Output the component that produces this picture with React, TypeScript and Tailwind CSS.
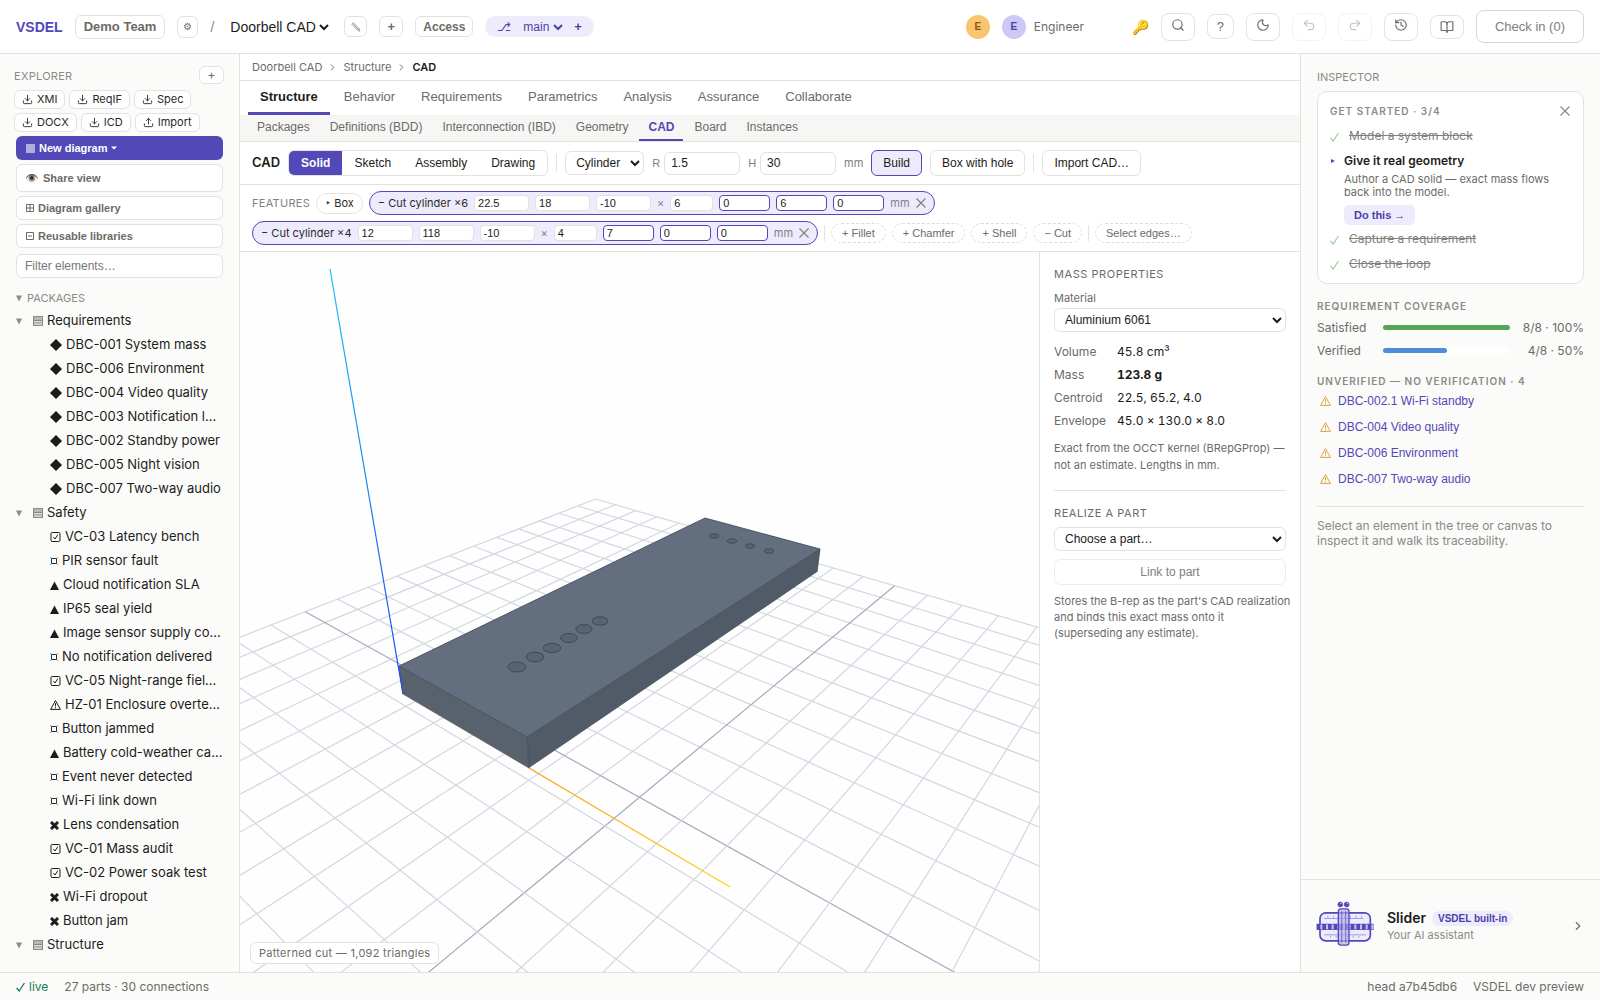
import React from "react";
import {
  BookOpen,
  ChevronRight,
  Download,
  History,
  Moon,
  Redo2,
  Search,
  Undo2,
  Upload,
} from "lucide-react";
import clsx from "clsx";

type IconKind = "diamond" | "check" | "pin" | "triangle" | "warning" | "cross";
type TreeNode = { icon: IconKind; label: string };
type TreeGroup = { name: string; items: TreeNode[] };

const tree: TreeGroup[] = [
  {
    name: "Requirements",
    items: [
      { icon: "diamond", label: "DBC-001 System mass" },
      { icon: "diamond", label: "DBC-006 Environment" },
      { icon: "diamond", label: "DBC-004 Video quality" },
      { icon: "diamond", label: "DBC-003 Notification l…" },
      { icon: "diamond", label: "DBC-002 Standby power" },
      { icon: "diamond", label: "DBC-005 Night vision" },
      { icon: "diamond", label: "DBC-007 Two-way audio" },
    ],
  },
  {
    name: "Safety",
    items: [
      { icon: "check", label: "VC-03 Latency bench" },
      { icon: "pin", label: "PIR sensor fault" },
      { icon: "triangle", label: "Cloud notification SLA" },
      { icon: "triangle", label: "IP65 seal yield" },
      { icon: "triangle", label: "Image sensor supply co…" },
      { icon: "pin", label: "No notification delivered" },
      { icon: "check", label: "VC-05 Night-range fiel…" },
      { icon: "warning", label: "HZ-01 Enclosure overte…" },
      { icon: "pin", label: "Button jammed" },
      { icon: "triangle", label: "Battery cold-weather ca…" },
      { icon: "pin", label: "Event never detected" },
      { icon: "pin", label: "Wi-Fi link down" },
      { icon: "cross", label: "Lens condensation" },
      { icon: "check", label: "VC-01 Mass audit" },
      { icon: "check", label: "VC-02 Power soak test" },
      { icon: "cross", label: "Wi-Fi dropout" },
      { icon: "cross", label: "Button jam" },
    ],
  },
  { name: "Structure", items: [] },
];

const exchange = ["XMI", "ReqIF", "Spec", "DOCX", "ICD", "Import"];

const tabs = [
  "Structure",
  "Behavior",
  "Requirements",
  "Parametrics",
  "Analysis",
  "Assurance",
  "Collaborate",
];

const subTabs = [
  "Packages",
  "Definitions (BDD)",
  "Interconnection (IBD)",
  "Geometry",
  "CAD",
  "Board",
  "Instances",
];

const modes = ["Solid", "Sketch", "Assembly", "Drawing"];

const massRows = [
  ["Volume", "45.8 cm³"],
  ["Mass", "123.8 g"],
  ["Centroid", "22.5, 65.2, 4.0"],
  ["Envelope", "45.0 × 130.0 × 8.0"],
];

const unverified = [
  "DBC-002.1 Wi-Fi standby",
  "DBC-004 Video quality",
  "DBC-006 Environment",
  "DBC-007 Two-way audio",
];

const arial = "font-['Liberation_Sans',Arial,sans-serif]";

const Cross: React.FC = () => (
  <svg width="10" height="10" viewBox="0 0 10 10" stroke="currentColor" strokeWidth="1.2">
    <path d="M0.5 0.5 9.5 9.5M9.5 0.5 0.5 9.5" />
  </svg>
);

const Check: React.FC = () => (
  <svg width="9" height="10" viewBox="0 0 9 10" fill="none" stroke="currentColor" strokeWidth="1.3">
    <path d="M0.6 6 3.2 9 8.4 1" />
  </svg>
);

const Caret: React.FC = () => (
  <svg width="6" height="7" viewBox="0 0 6 7" fill="currentColor">
    <path d="M0 0.5H6L3 6.5Z" />
  </svg>
);

const Warning: React.FC = () => (
  <svg
    width="11"
    height="10"
    viewBox="0 0 11 10"
    fill="none"
    stroke="currentColor"
    strokeLinejoin="round"
  >
    <path d="M5.5 0.6 10.4 9.4H0.6Z" />
    <path d="M5.5 3.2V6.4M5.5 7.2V8.3" />
  </svg>
);

const NodeIcon: React.FC<{ kind: IconKind }> = ({ kind }) => {
  switch (kind) {
    case "diamond":
      return (
        <svg width="12" height="12" viewBox="0 0 12 12" fill="currentColor">
          <path d="M6 0 12 6 6 12 0 6Z" />
        </svg>
      );
    case "check":
      return (
        <svg width="11" height="10" viewBox="0 0 11 10" fill="none" stroke="currentColor">
          <rect x="1" y="0.5" width="9" height="9" rx="1.2" />
          <path d="M3.4 5 5 7 7.8 2.6" />
        </svg>
      );
    case "pin":
      return (
        <svg width="8" height="8" viewBox="0 0 8 8" fill="none" stroke="currentColor" strokeWidth="0.9">
          <path d="M1.5 1.5H6.5V6.5H1.5ZM0.5 0.5 1.5 1.5M7.5 0.5 6.5 1.5M0.5 7.5 1.5 6.5M7.5 7.5 6.5 6.5" />
        </svg>
      );
    case "triangle":
      return (
        <svg width="9" height="9" viewBox="0 0 9 9" fill="currentColor">
          <path d="M4.5 0.5 9 9H0Z" />
        </svg>
      );
    case "warning":
      return <Warning />;
    case "cross":
      return (
        <svg width="9" height="9" viewBox="0 0 9 9" stroke="currentColor" strokeWidth="3">
          <path d="M1 1 8 8M8 1 1 8" />
        </svg>
      );
  }
};

type IconButtonProps = {
  label: string;
  className?: string;
  children: React.ReactNode;
};

const IconButton: React.FC<IconButtonProps> = ({ label, className, children }) => (
  <button
    aria-label={label}
    className={clsx(
      "flex items-center justify-center border border-[#e2e2df] bg-white text-[#6b6b68]",
      className
    )}
  >
    {children}
  </button>
);

const Header: React.FC = () => (
  <header
    className={clsx(
      "flex h-[54px] shrink-0 items-center gap-3 border-b border-[#e2e2df] bg-white px-4",
      arial
    )}
  >
    <span className="text-sm font-bold text-[#5348b7]">VSDEL</span>
    <button className="h-6 rounded-md border border-[#e2e2df] px-2 text-[13px] font-bold text-[#6b6b68]">
      Demo Team
    </button>
    <IconButton label="Team settings" className="h-[22px] w-[21px] rounded-md text-[10px]">
      ⚙
    </IconButton>
    <span className="text-sm text-[#8a8a86]">/</span>
    <select aria-label="Project" className="bg-transparent text-sm" defaultValue="Doorbell CAD">
      <option>Doorbell CAD</option>
    </select>
    <IconButton label="Rename" className="h-[21px] w-[23px] rounded-md">
      <svg width="10" height="10" viewBox="0 0 10 10" fill="none" stroke="#9a9a96" strokeWidth="0.9">
        <path d="M0.8 2.2 2.4 0.8 8 6.4 9 9.2 6.4 8ZM1.8 1.4 7.2 7.2M6.4 8 8 6.4" />
      </svg>
    </IconButton>
    <IconButton label="New project" className="h-[21px] w-6 rounded-md text-[13px] font-bold">
      +
    </IconButton>
    <button className="h-[21px] rounded-md border border-[#e2e2df] px-[7px] text-xs font-bold text-[#6b6b68]">
      Access
    </button>
    <div className="flex h-[21px] items-center gap-2 rounded-full bg-[#eeecfc] px-3 text-[#4a3fa8]">
      <span className="text-xs">⎇</span>
      <select aria-label="Branch" className="bg-transparent text-xs" defaultValue="main">
        <option>main</option>
      </select>
      <button aria-label="New branch" className="text-[13px] font-bold">
        +
      </button>
    </div>
    <div className="ml-auto flex items-center gap-3">
      <span className="flex size-6 items-center justify-center rounded-full bg-[#f9c66f] text-[10px] font-bold text-[#8a5a10]">
        E
      </span>
      <div className="mr-9 flex items-center gap-2">
        <span className="flex size-6 items-center justify-center rounded-full bg-[#cdc8f5] text-[10px] font-bold text-[#4a3fa8]">
          E
        </span>
        <span className="font-[Inter,sans-serif] text-xs text-[#6b6b68]">Engineer</span>
      </div>
      <span className="text-sm">🔑</span>
      <IconButton label="Search" className="h-7 w-[34px] rounded-lg pb-[3px]">
        <Search size={14} strokeWidth={2} />
      </IconButton>
      <IconButton label="Help" className="h-[25px] w-[27px] rounded-lg text-[13px]">
        ?
      </IconButton>
      <IconButton label="Theme" className="h-7 w-[34px] rounded-lg pb-[3px]">
        <Moon size={14} />
      </IconButton>
      <IconButton label="Undo" className="h-7 w-[34px] rounded-lg pb-[3px] opacity-40">
        <Undo2 size={14} />
      </IconButton>
      <IconButton label="Redo" className="h-7 w-[34px] rounded-lg pb-[3px] opacity-40">
        <Redo2 size={14} />
      </IconButton>
      <IconButton label="History" className="h-7 w-[34px] rounded-lg pb-[3px]">
        <History size={14} />
      </IconButton>
      <IconButton label="Docs" className="h-6 w-[34px] rounded-lg">
        <BookOpen size={14} />
      </IconButton>
      <button className="h-[33px] rounded-lg border border-[#d5d5d2] px-[18px] text-[13px] text-[#80807c]">
        Check in (0)
      </button>
    </div>
  </header>
);

const Explorer: React.FC = () => {
  const action =
    "flex items-center gap-1 rounded-md border border-[#e2e2df] bg-white px-2 text-[#6b6b68]";
  return (
    <aside className="flex w-60 shrink-0 flex-col overflow-hidden border-r border-[#e2e2df] bg-[#fbfbf9] pt-3">
      <div className="flex items-center justify-between pr-[15px] pl-[14px]">
        <h2 className="pt-[3px] text-[11px] leading-[15px] tracking-wide text-[#8a8a86]">
          EXPLORER
        </h2>
        <IconButton label="Add element" className="h-[18px] w-[25px] rounded-md text-xs">
          +
        </IconButton>
      </div>
      <div className="mt-[6px] flex flex-wrap gap-1 pr-8 pl-[14px]">
        {exchange.map((name) => (
          <button
            key={name}
            className="flex h-[19px] items-center gap-1 rounded-md border border-[#e2e2df] bg-white px-[7px] text-[11px] text-[#2a2a28]"
          >
            {name === "Import" ? <Upload size={11} /> : <Download size={11} />}
            {name}
          </button>
        ))}
      </div>
      <div className={clsx("mt-1 flex flex-col gap-1 px-4 text-[11px] font-bold", arial)}>
        <button className="flex h-6 items-center gap-1 rounded-md bg-[#5348b7] px-[10px] text-white">
          <span className="size-[9px] bg-white/55" />
          New diagram
          <svg width="6" height="4" viewBox="0 0 6 4" fill="currentColor">
            <path d="M0 0.5H6L3 3.5Z" />
          </svg>
        </button>
        <button className={clsx(action, "h-7")}>
          <span className="text-[11px]">👁️</span>
          Share view
        </button>
        <button className={clsx(action, "h-6")}>
          <svg width="9" height="8" viewBox="0 0 9 8" fill="none" stroke="currentColor">
            <path d="M1.5 0.5H8.5V7.5H1.5ZM5 0.5V7.5M1.5 4H8.5" />
          </svg>
          Diagram gallery
        </button>
        <button className={clsx(action, "h-6")}>
          <svg width="9" height="8" viewBox="0 0 9 8" fill="none" stroke="currentColor">
            <path d="M1.5 0.5H8.5V7.5H1.5ZM3 4H7" />
          </svg>
          Reusable libraries
        </button>
      </div>
      <div className="mt-[6px] px-4">
        <input
          aria-label="Filter elements"
          placeholder="Filter elements…"
          className={clsx(
            "block h-6 w-full rounded-md border border-[#e2e2df] bg-white px-2 text-xs placeholder:text-[#777774]",
            arial
          )}
        />
      </div>
      <h3 className="mt-[10px] flex h-[21px] items-center gap-[5px] px-4 text-[11px] text-[#8a8a86]">
        <Caret />
        PACKAGES
      </h3>
      <ul className="text-[13px] text-[#1c1c1a]">
        {tree.map((group) => (
          <li key={group.name}>
            <div className="flex h-6 items-center px-4">
              <span className="w-[17px] text-[#8a8a86]">
                <Caret />
              </span>
              <svg
                width="10"
                height="10"
                viewBox="0 0 10 10"
                className="mr-1 text-[#8a8a86]"
                stroke="currentColor"
              >
                <path d="M0.5 0V10M9.5 0V10M0 0.5H10M0 4.5H10M0 9.5H10" />
                <path d="M0 2.5H10M0 7H10" strokeWidth="3" opacity="0.6" />
              </svg>
              {group.name}
            </div>
            <ul>
              {group.items.map((item) => (
                <li
                  key={item.label}
                  className="flex h-6 items-center gap-1 pl-[50px] whitespace-nowrap"
                >
                  <NodeIcon kind={item.icon} />
                  {item.label}
                </li>
              ))}
            </ul>
          </li>
        ))}
      </ul>
    </aside>
  );
};

const Tabs: React.FC = () => (
  <div>
    <nav className="flex h-[27px] items-center gap-[5px] border-b border-[#e2e2df] px-3 text-[11px] text-[#6b6b68]">
      <a href="#project">Doorbell CAD</a>
      <ChevronRight size={11} />
      <a href="#structure">Structure</a>
      <ChevronRight size={11} />
      <span className="font-semibold text-[#1c1c1a]">CAD</span>
    </nav>
    <div className={clsx("flex h-[34px] gap-[2px] px-2", arial)}>
      {tabs.map((tab, index) => (
        <button
          key={tab}
          className={clsx(
            "border-b-[3px] px-3 text-[13px]",
            index === 0
              ? "border-[#5348b7] font-bold text-[#1c1c1a]"
              : "border-transparent text-[#6b6b68]"
          )}
        >
          {tab}
        </button>
      ))}
    </div>
    <div
      className={clsx(
        "flex h-[27px] gap-[2px] border-b border-[#e2e2df] bg-[#f6f6f4] px-2",
        arial
      )}
    >
      {subTabs.map((tab) => (
        <button
          key={tab}
          className={clsx(
            "border-b-2 px-[9px] text-xs",
            tab === "CAD"
              ? "border-[#5348b7] font-bold text-[#5348b7]"
              : "border-transparent text-[#6b6b68]"
          )}
        >
          {tab}
        </button>
      ))}
    </div>
  </div>
);

const Divider: React.FC<{ className: string }> = ({ className }) => (
  <span className={clsx("w-px bg-[#e2e2df]", className)} />
);

const Toolbar: React.FC = () => {
  const button = "h-[26px] rounded-md border px-[11px] text-xs text-[#1c1c1a]";
  return (
    <div
      className={clsx(
        "flex h-[43px] items-center gap-2 border-b border-[#e2e2df] px-3 text-xs text-[#1c1c1a]",
        arial
      )}
    >
      <span className="font-[Inter,sans-serif] text-[13px] font-semibold">CAD</span>
      <div className="flex h-[26px] overflow-hidden rounded-md border border-[#e2e2df]">
        {modes.map((mode, index) => (
          <button
            key={mode}
            className={clsx("px-3 text-xs", index === 0 && "bg-[#5348b7] font-bold text-white")}
          >
            {mode}
          </button>
        ))}
      </div>
      <Divider className="h-[18px]" />
      <select
        aria-label="Primitive"
        className="h-6 w-[79px] rounded-md border border-[#e2e2df] bg-white px-1.5 text-xs"
        defaultValue="Cylinder"
      >
        <option>Cylinder</option>
      </select>
      <label className="flex items-center gap-1 text-[11px] text-[#80807c]">
        R
        <input
          defaultValue="1.5"
          className="h-[23px] w-[76px] rounded-md border border-[#e2e2df] px-1.5 text-xs text-[#1c1c1a]"
        />
      </label>
      <label className="flex items-center gap-1 text-[11px] text-[#80807c]">
        H
        <input
          defaultValue="30"
          className="h-[23px] w-[76px] rounded-md border border-[#e2e2df] px-1.5 text-xs text-[#1c1c1a]"
        />
      </label>
      <span className="font-[Inter,sans-serif] text-[11px] text-[#80807c]">mm</span>
      <button className={clsx(button, "border-[#5348b7] bg-[#eeecfc]")}>Build</button>
      <button className={clsx(button, "border-[#e2e2df]")}>Box with hole</button>
      <Divider className="h-[18px]" />
      <button className={clsx(button, "border-[#e2e2df]")}>Import CAD…</button>
    </div>
  );
};

type CutChipProps = {
  label: string;
  position: string[];
  count: string;
  pitch: string[];
};

const CutChip: React.FC<CutChipProps> = ({ label, position, count, pitch }) => {
  const field = clsx("h-4 rounded border bg-white px-[3px] text-[11px] text-[#1c1c1a]", arial);
  return (
    <div className="flex h-6 items-center gap-[6px] rounded-full border border-[#5348b7] bg-[#eeecfc] px-2 text-[11px] text-[#2a2a28]">
      <span>{label}</span>
      {position.map((value, index) => (
        <input
          key={index}
          aria-label={`${label} position ${index + 1}`}
          defaultValue={value}
          className={clsx(field, "w-[55px] border-[#e2e2df]")}
        />
      ))}
      <span className="text-[#80807c]">×</span>
      <input
        aria-label={`${label} count`}
        defaultValue={count}
        className={clsx(field, "w-[43px] border-[#e2e2df]")}
      />
      {pitch.map((value, index) => (
        <input
          key={index}
          aria-label={`${label} pitch ${index + 1}`}
          defaultValue={value}
          className={clsx(field, "w-[51px] border-[#5348b7]")}
        />
      ))}
      <span className="text-[#80807c]">mm</span>
      <button aria-label={`Remove ${label}`} className="text-[#80807c]">
        <Cross />
      </button>
    </div>
  );
};

const DashedChip: React.FC<{ children: string }> = ({ children }) => (
  <button
    className={clsx(
      "h-5 rounded-full border border-dashed border-[#dcdcd9] px-[10px] text-[11px] text-[#6b6b68]",
      arial
    )}
  >
    {children}
  </button>
);

const Features: React.FC = () => (
  <div className="flex flex-wrap items-center gap-[6px] border-b border-[#e2e2df] px-3 py-[6px]">
    <span className="text-[11px] tracking-wide text-[#80807c]">FEATURES</span>
    <button className="h-[21px] rounded-full border border-[#e2e2df] bg-white px-2 text-[11px] text-[#2a2a28]">
      ‣ Box
    </button>
    <CutChip
      label="− Cut cylinder ×6"
      position={["22.5", "18", "-10"]}
      count="6"
      pitch={["0", "6", "0"]}
    />
    <CutChip
      label="− Cut cylinder ×4"
      position={["12", "118", "-10"]}
      count="4"
      pitch={["7", "0", "0"]}
    />
    <Divider className="h-4" />
    {["+ Fillet", "+ Chamfer", "+ Shell", "− Cut"].map((name) => (
      <DashedChip key={name}>{name}</DashedChip>
    ))}
    <Divider className="h-4" />
    <DashedChip>Select edges…</DashedChip>
  </div>
);

// Ground plane: 24x24 cells, (0,0) is the far corner and (24,24) lies behind the camera.
const GRID = 24;
const depth = (a: number, b: number) => 1 - (0.22462 * a) / 12 - (0.27678 * b) / 12;

const project = (a: number, b: number) => {
  const w = depth(a, b);
  const x = (595.6 + (98.05 * a) / 12 - (374.8 * b) / 12) / w;
  const y = (499 - (44.86 * a) / 12 - (56.61 * b) / 12) / w;
  return [x, y];
};

const gridLine = (a0: number, b0: number, a1: number, b1: number) => {
  const near = 0.1;
  const w0 = depth(a0, b0);
  const w1 = depth(a1, b1);
  const t = w1 < near ? (w0 - near) / (w0 - w1) : 1;
  const [x1, y1] = project(a0, b0);
  const [x2, y2] = project(a0 + (a1 - a0) * t, b0 + (b1 - b0) * t);
  return { x1, y1, x2, y2 };
};

const ventHoles = [
  [517, 667],
  [535, 657],
  [552, 648],
  [569, 638],
  [584, 629],
  [600, 621],
];

const screwHoles = [
  [714, 536],
  [732, 541],
  [750, 546],
  [769, 551],
];

const Viewport: React.FC = () => {
  const steps = Array.from({ length: GRID + 1 }, (_, i) => i);
  return (
    <div className="relative min-w-0 flex-1 bg-[#fefefe]">
      <svg
        viewBox="240 252 799 720"
        preserveAspectRatio="xMidYMid slice"
        className="absolute inset-0 size-full"
      >
        <defs>
          <linearGradient id="zAxis" x1="0" y1="1" x2="0" y2="0">
            <stop offset="0" stopColor="#1a3fff" />
            <stop offset="0.5" stopColor="#1a85f0" />
            <stop offset="1" stopColor="#10c4f5" />
          </linearGradient>
          <linearGradient id="xAxis" x1="0" y1="0" x2="1" y2="1">
            <stop offset="0" stopColor="#ff9a1a" />
            <stop offset="1" stopColor="#ffd21a" />
          </linearGradient>
        </defs>
        <g strokeWidth="1.2">
          {steps.map((i) => (
            <g key={i} stroke={i === 12 ? "#a3abba" : "#d3d7e2"}>
              <line {...gridLine(i, 0, i, GRID)} />
              <line {...gridLine(0, i, GRID, i)} />
            </g>
          ))}
        </g>
        <line x1="403" y1="694" x2="330" y2="269" stroke="url(#zAxis)" strokeWidth="1.2" />
        <line x1="529" y1="768" x2="730" y2="887" stroke="url(#xAxis)" strokeWidth="1.3" />
        <g strokeLinejoin="round">
          <path d="M399 666 705 518 820 549 527 737Z" fill="#636e7e" />
          <path d="M399 666 527 737 529 768 403 694Z" fill="#57626d" />
          <path d="M527 737 820 549 817 572 529 768Z" fill="#515b67" />
          <path
            d="M399 666 705 518 820 549 527 737ZM527 737 529 768M820 549 817 572"
            fill="none"
            stroke="#3a4553"
            strokeWidth="0.8"
          />
          <path d="M399 666 403 694" stroke="#2f4fb0" strokeWidth="1" />
          <path d="M403 694 529 768" stroke="#6d5f5a" strokeWidth="0.8" />
        </g>
        <g fill="#58646f" stroke="#3a4553" strokeWidth="0.9">
          {ventHoles.map(([x, y], i) => (
            <ellipse key={x} cx={x} cy={y} rx={9 - i * 0.2} ry={5 - i * 0.15} />
          ))}
          {screwHoles.map(([x, y]) => (
            <ellipse key={x} cx={x} cy={y} rx="4.6" ry="2.1" />
          ))}
        </g>
      </svg>
      <div className="absolute bottom-2 left-[10px] rounded-md border border-[#e2e2df] bg-white px-2 py-px text-[11px] leading-[18px] tracking-wide text-[#6b6b68]">
        Patterned cut — 1,092 triangles
      </div>
    </div>
  );
};

const MassPanel: React.FC = () => {
  const select = clsx(
    "block h-6 w-full rounded-md border border-[#e2e2df] bg-white px-1.5 text-xs text-[#1c1c1a]",
    arial
  );
  return (
    <section className="w-[261px] shrink-0 border-l border-[#e2e2df] bg-white px-[14px] pt-[14px] text-[11px] text-[#6b6b68]">
      <h3 className="leading-4 tracking-wider">MASS PROPERTIES</h3>
      <label className="mt-2 block leading-4">
        Material
        <select className={clsx(select, "mt-[2px]")} defaultValue="Aluminium 6061">
          <option>Aluminium 6061</option>
        </select>
      </label>
      <table className="mt-2 text-xs tabular-nums">
        <tbody>
          {massRows.map(([name, value]) => (
            <tr key={name} className="h-[23px]">
              <th className="w-[63px] text-left font-normal">{name}</th>
              <td className={clsx("text-[#1c1c1a]", name === "Mass" && "font-bold")}>{value}</td>
            </tr>
          ))}
        </tbody>
      </table>
      <p className="mt-2 leading-[17px]">
        Exact from the OCCT kernel (BRepGProp) — not an estimate. Lengths in mm.
      </p>
      <hr className="mt-4 border-[#e2e2df]" />
      <h3 className="mt-[14px] leading-4 tracking-wider">REALIZE A PART</h3>
      <select aria-label="Part" className={clsx(select, "mt-[6px]")} defaultValue="Choose a part…">
        <option>Choose a part…</option>
      </select>
      <button
        disabled
        className={clsx(
          "mt-2 h-[26px] w-full rounded-md border border-[#ededeb] text-xs text-[#80807c]",
          arial
        )}
      >
        Link to part
      </button>
      <p className="mt-2 leading-4 whitespace-nowrap">
        Stores the B-rep as the part's CAD realization
        <br />
        and binds this exact mass onto it
        <br />
        (superseding any estimate).
      </p>
    </section>
  );
};

const DoneStep: React.FC<{ children: string }> = ({ children }) => (
  <li className="flex h-[25px] items-center gap-2 text-xs text-[#80807c]">
    <span className="w-[11px] pt-[2px] text-[#9fd0a0]">
      <Check />
    </span>
    <span className="line-through">{children}</span>
  </li>
);

const CoverageRow: React.FC<{ name: string; value: string; percent: number; bar: string }> = ({
  name,
  value,
  percent,
  bar,
}) => (
  <div className="flex h-[23px] items-center text-xs text-[#6b6b68]">
    <span className="w-[66px]">{name}</span>
    <span className="h-[5px] flex-1 rounded-full bg-white">
      <span className={clsx("block h-full rounded-full", bar)} style={{ width: `${percent}%` }} />
    </span>
    <span className="w-[74px] text-right">{value}</span>
  </div>
);

const SliderLogo: React.FC = () => (
  <svg viewBox="108 118 174 140" width="58" height="47" fill="none" stroke="#5348b7">
    <rect x="120" y="156" width="151" height="84" rx="17" fill="#eeecfc" strokeWidth="5" />
    <path d="M132 173h118M132 222h126" stroke="#a49de0" strokeWidth="3" />
    <path d="M142 168h104M150 228h96" stroke="#a49de0" strokeWidth="6" strokeDasharray="3 14" />
    <path d="M110 198h171" stroke="#c6c0f0" strokeWidth="17" />
    <path d="M110 198h171" strokeWidth="17" strokeDasharray="11 6" />
    <path d="M110 190h171M110 206h171" strokeWidth="2" />
    <rect
      x="175"
      y="144"
      width="32"
      height="109"
      rx="8"
      fill="#b5aee8"
      fillOpacity="0.65"
      strokeWidth="4"
    />
    <path d="M185 150v96M197 150v96" strokeWidth="2" />
    <circle cx="181" cy="131" r="7" fill="#5348b7" strokeWidth="3" />
    <circle cx="200" cy="131" r="7" fill="#5348b7" strokeWidth="3" />
    <circle cx="183" cy="128" r="2" fill="#c6c0f0" stroke="none" />
    <circle cx="202" cy="128" r="2" fill="#c6c0f0" stroke="none" />
  </svg>
);

const Inspector: React.FC = () => (
  <aside className="flex w-[300px] shrink-0 flex-col border-l border-[#e2e2df] bg-[#fbfbf9]">
    <div className="flex-1 px-4 pt-4">
      <h2 className="text-[11px] leading-[14px] text-[#8a8a86]">INSPECTOR</h2>
      <section className="mt-[7px] rounded-[10px] border border-[#e2e2df] bg-white px-3 pt-[11px] pb-[7px]">
        <div className="flex h-4 items-center justify-between text-[#8a8a86]">
          <h3 className="text-[10px] font-semibold tracking-widest">GET STARTED · 3/4</h3>
          <button aria-label="Dismiss" className="mr-px">
            <Cross />
          </button>
        </div>
        <ul className="mt-1">
          <DoneStep>Model a system block</DoneStep>
          <li className="flex gap-[6px]">
            <span className="w-2 pt-[10px] text-[#5348b7]">
              <svg width="5" height="6" viewBox="0 0 5 6" fill="currentColor">
                <path d="M1 1 5 3 1 5Z" />
              </svg>
            </span>
            <div className="flex flex-1 flex-col items-start">
              <span className="text-xs leading-[25px] font-semibold text-[#1c1c1a]">
                Give it real geometry
              </span>
              <span className="text-[11px] leading-[13px] text-[#6b6b68]">
                Author a CAD solid — exact mass flows back into the model.
              </span>
              <button
                className={clsx(
                  "mt-[6px] mb-px h-5 rounded-[5px] bg-[#eeecfc] px-[10px] text-[11px] font-bold text-[#4a3fa8]",
                  arial
                )}
              >
                Do this →
              </button>
            </div>
          </li>
          <DoneStep>Capture a requirement</DoneStep>
          <DoneStep>Close the loop</DoneStep>
        </ul>
      </section>
      <h3 className="mt-[15px] mb-[3px] text-[10px] leading-[14px] font-semibold tracking-widest text-[#8a8a86]">
        REQUIREMENT COVERAGE
      </h3>
      <CoverageRow name="Satisfied" value="8/8 · 100%" percent={100} bar="bg-[#57a559]" />
      <CoverageRow name="Verified" value="4/8 · 50%" percent={50} bar="bg-[#4a8fd8]" />
      <h3 className="mt-3 text-[10px] leading-[14px] font-semibold tracking-widest text-[#8a8a86]">
        UNVERIFIED — NO VERIFICATION · 4
      </h3>
      <ul>
        {unverified.map((name) => (
          <li key={name}>
            <button
              className={clsx(
                "flex h-[26px] items-center gap-[7px] pl-[3px] text-xs text-[#5348b7]",
                arial
              )}
            >
              <span className="text-[#d9a441]">
                <Warning />
              </span>
              {name}
            </button>
          </li>
        ))}
      </ul>
      <hr className="mt-[14px] border-[#e2e2df]" />
      <p className="mt-[11px] text-xs leading-[15px] text-[#8a8a86]">
        Select an element in the tree or canvas to inspect it and walk its traceability.
      </p>
    </div>
    <button className="flex h-[93px] items-center border-t border-[#e2e2df] px-[15px] text-left">
      <span className="mb-[6px]">
        <SliderLogo />
      </span>
      <span className="ml-[13px] flex-1">
        <span className="flex items-center gap-[6px] text-sm leading-[18px] font-semibold text-[#1c1c1a]">
          Slider
          <span
            className={clsx(
              "rounded-full bg-[#eeecfc] px-[6px] text-[10px] leading-[15px] font-bold text-[#4a3fa8]",
              arial
            )}
          >
            VSDEL built-in
          </span>
        </span>
        <span className="block text-[11px] leading-4 text-[#8a8a86]">Your AI assistant</span>
      </span>
      <ChevronRight size={14} className="text-[#6b6b68]" />
    </button>
  </aside>
);

const App: React.FC = () => {
  return (
    <div className="flex h-screen flex-col overflow-hidden bg-white font-[Inter,sans-serif] text-[#1c1c1a]">
      <Header />
      <div className="flex min-h-0 flex-1">
        <Explorer />
        <main className="flex min-w-0 flex-1 flex-col">
          <Tabs />
          <Toolbar />
          <Features />
          <div className="flex min-h-0 flex-1">
            <Viewport />
            <MassPanel />
          </div>
        </main>
        <Inspector />
      </div>
      <footer className="flex h-7 shrink-0 items-center gap-4 border-t border-[#e2e2df] bg-[#fbfbf9] px-4 text-xs text-[#6b6b68]">
        <span className="flex items-center gap-1 text-[#1f7a5c]">
          <Check />
          live
        </span>
        <span>27 parts · 30 connections</span>
        <span className="ml-auto">head a7b45db6</span>
        <span>VSDEL dev preview</span>
      </footer>
    </div>
  );
};

export default App;
